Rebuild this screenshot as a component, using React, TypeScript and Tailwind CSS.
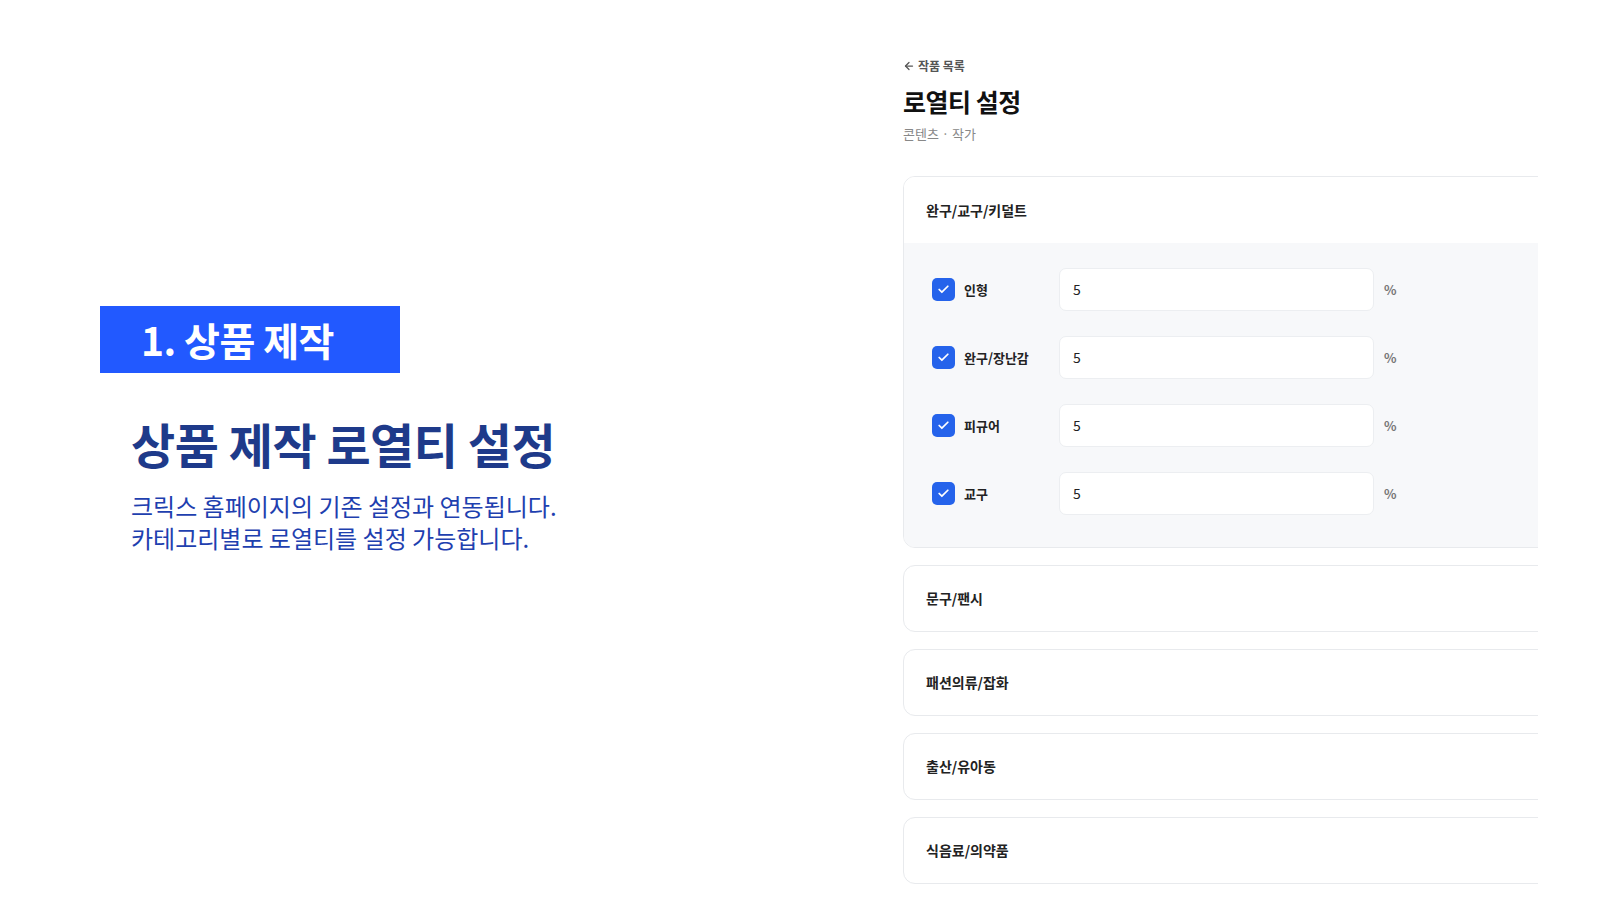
import { Check, ArrowLeft } from "lucide-react";

const font = { fontFamily: '"Noto Sans CJK KR", "Noto Sans", sans-serif' };

const items = ["인형", "완구/장난감", "피규어", "교구"];
const others = ["문구/팬시", "패션의류/잡화", "출산/유아동", "식음료/의약품"];

function Row({ label }: { label: string }) {
  return (
    <div className="flex items-center h-[43px]">
      <div className="flex items-center w-[155px] pl-[28px]">
        <span className="w-[23px] h-[23px] rounded-[5px] bg-[#2563eb] flex items-center justify-center">
          <Check size={13} strokeWidth={3.2} className="text-white" />
        </span>
        <span className="ml-[9px] text-[13px] font-bold text-[#222]">{label}</span>
      </div>
      <div className="w-[315px] h-[43px] rounded-[7px] border border-[#eceef1] bg-white flex items-center px-[13px] text-[14px] text-[#222]">
        5
      </div>
      <span className="ml-[10px] text-[13px] font-bold text-[#777]">%</span>
    </div>
  );
}

export default function App() {
  return (
    <div className="w-[1600px] h-[900px] bg-white flex" style={font}>
      {/* Left intro */}
      <div className="w-[903px] pl-[100px] pt-[306px]">
        <div className="w-[300px] h-[67px] bg-[#2259ff] flex items-center pl-[41px]">
          <span className="text-white text-[39px] font-bold tracking-[-0.5px]">1. 상품 제작</span>
        </div>
        <div className="pl-[31px] mt-[41px]">
          <h1 className="text-[#1e3a8a] text-[48px] font-bold leading-[58px] tracking-[-0.5px]">
            상품 제작 로열티 설정
          </h1>
          <p className="mt-[18px] text-[#1e40af] text-[24px] leading-[32px]">
            크릭스 홈페이지의 기존 설정과 연동됩니다.
            <br />
            카테고리별로 로열티를 설정 가능합니다.
          </p>
        </div>
      </div>

      {/* Right settings */}
      <div className="w-[635px] overflow-hidden pt-[56px]">
        <div className="flex items-center gap-[3px] text-[12px] font-bold text-[#555] h-[20px]">
          <ArrowLeft size={12} strokeWidth={2.5} />
          <span>작품 목록</span>
        </div>
        <h2 className="mt-[8px] text-[25px] font-bold text-[#111] leading-[34px] tracking-[-0.5px]">로열티 설정</h2>
        <div className="mt-[7px] text-[13px] text-[#888] leading-[18px]">콘텐츠 · 작가</div>

        <div className="mt-[33px] w-[720px] flex flex-col gap-[17px]">
          <div className="rounded-[12px] border border-[#e8eaed] overflow-hidden">
            <div className="h-[66px] bg-white flex items-center pl-[22px] text-[14px] font-bold text-[#222]">
              완구/교구/키덜트
            </div>
            <div className="bg-[#f7f8fa] pt-[25px] pb-[32px] flex flex-col gap-[25px]">
              {items.map((it) => (
                <Row key={it} label={it} />
              ))}
            </div>
          </div>
          {others.map((o) => (
            <div
              key={o}
              className="h-[67px] rounded-[12px] border border-[#e8eaed] bg-white flex items-center pl-[22px] text-[14px] font-bold text-[#222]"
            >
              {o}
            </div>
          ))}
        </div>
      </div>
    </div>
  );
}
